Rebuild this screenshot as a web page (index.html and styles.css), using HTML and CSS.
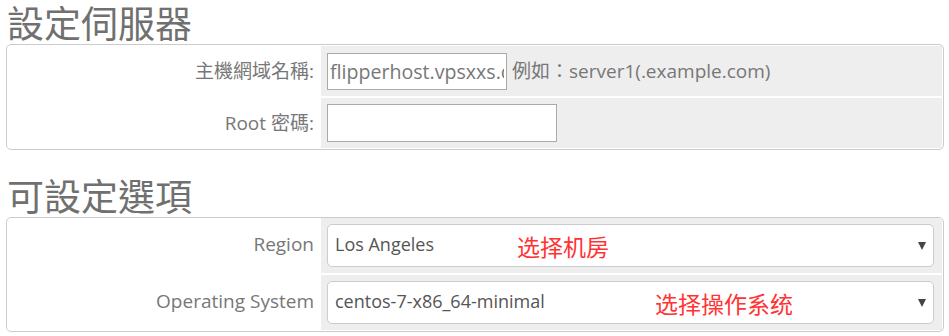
FILE: index.html
```html
<!DOCTYPE html>
<html lang="zh-Hant">
<head>
    <meta charset="UTF-8">
    <meta name="viewport" content="width=device-width, initial-scale=1.0">
    <title>設定伺服器</title>
    <link rel="stylesheet" href="styles.css">
</head>
<body>
    <h2 class="section-title">設定伺服器</h2>
    <div class="form-box">
        <div class="form-label">主機網域名稱:</div>
        <div class="form-field">
            <input class="text-input short" type="text" value="flipperhost.vpsxxs.com">
            <span class="hint">例如：server1(.example.com)</span>
        </div>
        <div class="form-label">Root 密碼:</div>
        <div class="form-field">
            <input class="text-input" type="password">
        </div>
    </div>

    <h2 class="section-title second">可設定選項</h2>
    <div class="form-box tall">
        <div class="form-label">Region</div>
        <div class="form-field">
            <div class="select-wrap">
                <select class="select-input">
                    <option>Los Angeles</option>
                </select>
                <span class="note note-region">选择机房</span>
                <span class="arrow"></span>
            </div>
        </div>
        <div class="form-label">Operating System</div>
        <div class="form-field">
            <div class="select-wrap">
                <select class="select-input">
                    <option>centos-7-x86_64-minimal</option>
                </select>
                <span class="note note-os">选择操作系统</span>
                <span class="arrow"></span>
            </div>
        </div>
    </div>
</body>
</html>
```

FILE: styles.css
```css
body {
    margin: 0 5px 0 6px;
    font-family: "Open Sans", "Noto Sans CJK TC", sans-serif;
    color: #777;
    background: #fff;
}
.section-title {
    margin: 0;
    padding-left: 1px;
    font-family: "Noto Sans CJK TC", sans-serif;
    font-size: 37px;
    font-weight: normal;
    line-height: 44px;
    color: #707070;
}
.section-title.second {
    margin-top: 23px;
}
.form-box {
    display: grid;
    grid-template-columns: 312px 1fr;
    grid-auto-rows: 50px;
    column-gap: 1px;
    row-gap: 2px;
    padding: 1px;
    border: 1px solid #ccc;
    border-radius: 5px;
}
.form-box.tall {
    grid-auto-rows: 55px;
    padding-top: 0;
}
.form-label {
    display: flex;
    align-items: center;
    justify-content: flex-end;
    padding: 0 6px 3px 0;
    font-size: 19px;
}
.form-field {
    display: flex;
    align-items: center;
    padding: 0 8px 0 6px;
    background: #eee;
}
.text-input {
    box-sizing: border-box;
    width: 230px;
    height: 38px;
    margin: 0;
    padding: 0 2px;
    border: 1px solid #aaa;
    border-radius: 0;
    background: #fff;
    font-family: "Open Sans", sans-serif;
    font-size: 19.6px;
    color: #777;
    outline: none;
}
.text-input.short {
    width: 180px;
    height: 37px;
}
.hint {
    margin: 0 0 2px 5px;
    font-size: 19px;
    white-space: nowrap;
}
.select-wrap {
    position: relative;
    flex: 1;
}
.select-input {
    box-sizing: border-box;
    width: 100%;
    height: 43px;
    margin: 0;
    padding: 0 0 3px 7px;
    appearance: none;
    -webkit-appearance: none;
    border: 1px solid #ccc;
    border-radius: 5px;
    background: #fff;
    font-family: "Open Sans", sans-serif;
    font-size: 18px;
    color: #555;
    outline: none;
}
.note {
    position: absolute;
    top: 7px;
    font-family: "Noto Sans CJK SC", sans-serif;
    font-size: 23px;
    line-height: 30px;
    color: #f33;
    pointer-events: none;
}
.note-region { left: 190px; }
.note-os { left: 328px; }
.arrow {
    position: absolute;
    top: 18px;
    right: 8px;
    width: 0;
    height: 0;
    border-left: 4px solid transparent;
    border-right: 4px solid transparent;
    border-top: 8px solid #444;
    pointer-events: none;
}
```
